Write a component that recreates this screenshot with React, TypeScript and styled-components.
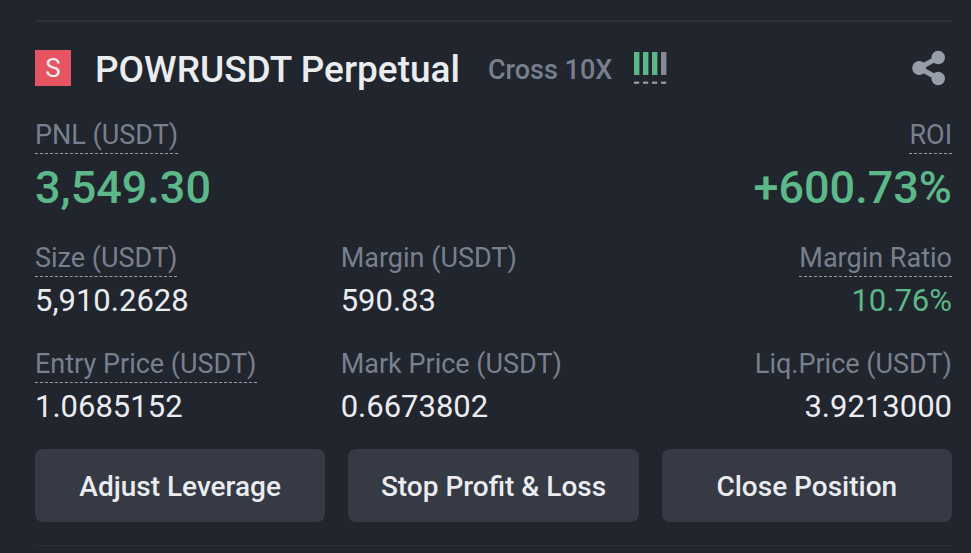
import React from "react";
import styled, { createGlobalStyle } from "styled-components";

const colors = {
  page: "#21252e",
  line: "#2c3039",
  text: "#eaecef",
  muted: "#787f8d",
  icon: "#989ea9",
  green: "#5cb888",
  red: "#e55561",
  button: "#353a45",
};

const GlobalStyle = createGlobalStyle`
  *, *::before, *::after { box-sizing: border-box; }
  html, body { margin: 0; background: ${colors.page}; }
  body, button { font-family: Roboto, "Liberation Sans", sans-serif; }
`;

const Card = styled.article`
  margin: 20px 19px 0 35px;
  border-top: 2px solid ${colors.line};
  border-bottom: 1px solid ${colors.line};
  padding: 26px 0 23px;
  color: ${colors.text};
`;

const Header = styled.header`
  display: flex;
  align-items: center;
  height: 40px;
`;

const SideBadge = styled.span`
  display: flex;
  justify-content: center;
  width: 36px;
  height: 36px;
  margin-right: 24px;
  background: ${colors.red};
  font-size: 26px;
  line-height: 36px;
`;

const Title = styled.h1`
  margin: 0 28px 0 0;
  padding-top: 4px;
  font-size: 37px;
  line-height: 40px;
  font-weight: 500;
  white-space: nowrap;
`;

const Mode = styled.span`
  margin-right: 22px;
  padding-top: 4px;
  color: ${colors.muted};
  font-size: 27px;
  line-height: 40px;
  font-weight: 500;
  white-space: nowrap;
`;

const ShareButton = styled.button`
  display: flex;
  margin-left: auto;
  padding: 0 6px 0 0;
  border: 0;
  background: none;
  color: ${colors.icon};
  cursor: pointer;
`;

const Stats = styled.dl<{ $columns: number }>`
  display: grid;
  grid-template-columns: repeat(${(p) => p.$columns}, 1fr);
  margin: 0;
  padding-top: 30px;

  & + & { padding-top: 35px; }
  & + & + & { padding-top: 28px; }
`;

const Stat = styled.div`
  display: flex;
  flex-direction: column;
  align-items: flex-start;
  white-space: nowrap;

  &:last-child { align-items: flex-end; }
`;

const Label = styled.dt<{ $hint?: boolean }>`
  height: 36px;
  border-bottom: 1px dashed ${(p) => (p.$hint ? colors.icon : "transparent")};
  color: ${colors.muted};
  font-size: 27px;
  line-height: 34px;
`;

const Value = styled.dd<{ $green?: boolean; $large?: boolean }>`
  margin: 0;
  color: ${(p) => (p.$green ? colors.green : colors.text)};
  font-size: ${(p) => (p.$large ? 45 : 31)}px;
  line-height: ${(p) => (p.$large ? 68 : 48)}px;
  height: ${(p) => (p.$large ? 52 : 42)}px;
  font-weight: ${(p) => (p.$large ? 500 : 400)};
`;

const Actions = styled.div`
  display: grid;
  grid-template-columns: repeat(3, 1fr);
  gap: 23px;
  padding-top: 24px;
`;

const Action = styled.button`
  height: 73px;
  padding: 2px 0 0;
  border: 0;
  border-radius: 8px;
  background: ${colors.button};
  color: ${colors.text};
  font-size: 28px;
  line-height: 32px;
  font-weight: 500;
  white-space: nowrap;
  cursor: pointer;
`;

const RiskBars = () => (
  <svg width="33" height="32" viewBox="0 0 33 32" role="img" aria-label="ADL level">
    {[0, 9, 18, 27].map((x) => (
      <g key={x}>
        <rect x={x} y="0" width="5.4" height="23" fill={x < 27 ? colors.green : "#858a98"} />
        <rect x={x} y="29.6" width="5.2" height="2.2" fill="#989ea9" />
      </g>
    ))}
  </svg>
);

const ShareIcon = () => (
  <svg width="34" height="36" viewBox="0 0 34 36" fill="currentColor" aria-hidden="true">
    <path d="M26.5 7.5 7 18l19.5 10.5" fill="none" stroke="currentColor" strokeWidth="5" />
    <circle cx="26.2" cy="7.5" r="6.8" />
    <circle cx="7.2" cy="18" r="7" />
    <circle cx="26.2" cy="28.5" r="6.8" />
  </svg>
);

type Item = { label: string; value: string; hint?: boolean; green?: boolean };

const summary: Item[] = [
  { label: "PNL (USDT)", value: "3,549.30", hint: true, green: true },
  { label: "ROI", value: "+600.73%", hint: true, green: true },
];

const sizing: Item[] = [
  { label: "Size (USDT)", value: "5,910.2628", hint: true },
  { label: "Margin (USDT)", value: "590.83" },
  { label: "Margin Ratio", value: "10.76%", hint: true, green: true },
];

const prices: Item[] = [
  { label: "Entry Price (USDT)", value: "1.0685152", hint: true },
  { label: "Mark Price (USDT)", value: "0.6673802" },
  { label: "Liq.Price (USDT)", value: "3.9213000" },
];

const StatRow = ({ items, large }: { items: Item[]; large?: boolean }) => (
  <Stats $columns={items.length}>
    {items.map((item) => (
      <Stat key={item.label}>
        <Label $hint={item.hint}>{item.label}</Label>
        <Value $green={item.green} $large={large}>{item.value}</Value>
      </Stat>
    ))}
  </Stats>
);

export default function App() {
  return (
    <>
      <GlobalStyle />
      <Card>
        <Header>
          <SideBadge>S</SideBadge>
          <Title>POWRUSDT Perpetual</Title>
          <Mode>Cross 10X</Mode>
          <RiskBars />
          <ShareButton type="button" aria-label="Share position">
            <ShareIcon />
          </ShareButton>
        </Header>
        <StatRow items={summary} large />
        <StatRow items={sizing} />
        <StatRow items={prices} />
        <Actions>
          <Action type="button">Adjust Leverage</Action>
          <Action type="button">Stop Profit &amp; Loss</Action>
          <Action type="button">Close Position</Action>
        </Actions>
      </Card>
    </>
  );
}
